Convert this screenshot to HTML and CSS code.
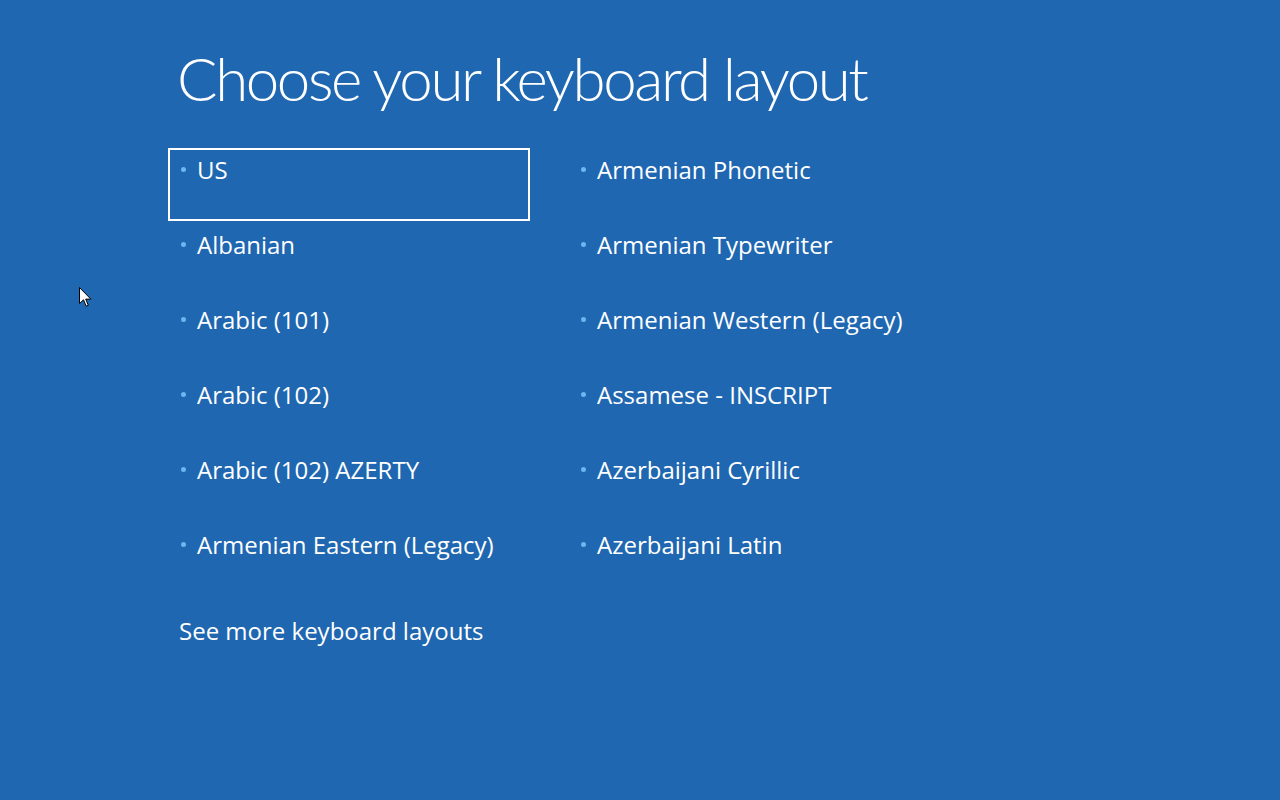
FILE: index.html
```html
<!DOCTYPE html>
<html lang="en">
<head>
<meta charset="utf-8">
<title>Choose your keyboard layout</title>
<link rel="stylesheet" href="styles.css">
</head>
<body>
<main class="page">
  <h1 class="title">Choose your keyboard layout</h1>
  <ul class="layouts">
    <li class="layout selected"><span class="dot"></span><span class="name">US</span></li>
    <li class="layout"><span class="dot"></span><span class="name">Armenian Phonetic</span></li>
    <li class="layout"><span class="dot"></span><span class="name">Albanian</span></li>
    <li class="layout"><span class="dot"></span><span class="name">Armenian Typewriter</span></li>
    <li class="layout"><span class="dot"></span><span class="name">Arabic (101)</span></li>
    <li class="layout"><span class="dot"></span><span class="name">Armenian Western (Legacy)</span></li>
    <li class="layout"><span class="dot"></span><span class="name">Arabic (102)</span></li>
    <li class="layout"><span class="dot"></span><span class="name">Assamese - INSCRIPT</span></li>
    <li class="layout"><span class="dot"></span><span class="name">Arabic (102) AZERTY</span></li>
    <li class="layout"><span class="dot"></span><span class="name">Azerbaijani Cyrillic</span></li>
    <li class="layout"><span class="dot"></span><span class="name">Armenian Eastern (Legacy)</span></li>
    <li class="layout"><span class="dot"></span><span class="name">Azerbaijani Latin</span></li>
  </ul>
  <a class="more" href="#">See more keyboard layouts</a>
  <svg class="cursor" width="13" height="21" viewBox="0 0 13 21" aria-hidden="true">
    <path d="M0.5 0.5 L0.5 16.5 L4.5 12.8 L7.2 19.2 L9.3 18.3 L6.7 12.1 L11.8 12.1 Z" fill="#fff" stroke="#000" stroke-width="1" stroke-linejoin="miter"/>
  </svg>
</main>
</body>
</html>
```
FILE: styles.css
```css
html, body {
  margin: 0;
  padding: 0;
  height: 100%;
}

body {
  background: #1f67b1;
  color: #ffffff;
  font-family: "Open Sans", "Noto Sans", "Liberation Sans", sans-serif;
  overflow: hidden;
}

.page {
  position: relative;
  height: 800px;
  padding: 48px 0 0 168px;
  box-sizing: border-box;
  display: flex;
  flex-direction: column;
  align-items: flex-start;
}

.title {
  margin: 0 0 40px 9px;
  font-family: Lato, "Open Sans", sans-serif;
  font-size: 60px;
  line-height: 60px;
  font-weight: 300;
  letter-spacing: -2.4px;
  white-space: nowrap;
}

.layouts {
  list-style: none;
  margin: 0;
  padding: 0;
  display: grid;
  grid-template-columns: 362px 362px;
  grid-auto-rows: 73px;
  column-gap: 38px;
  row-gap: 2px;
}

.layout {
  display: flex;
  align-items: flex-start;
  gap: 11px;
  box-sizing: border-box;
  border: 2px solid transparent;
  padding: 4px 0 0 11px;
  font-size: 24px;
  line-height: 32px;
  white-space: nowrap;
}

.layout.selected {
  border-color: #ffffff;
}

.dot {
  flex: none;
  width: 5px;
  height: 5px;
  margin-top: 13px;
  border-radius: 50%;
  background: #6fb5ef;
}

.more {
  margin: 19px 0 0 11px;
  font-size: 24px;
  line-height: 32px;
  color: #ffffff;
  text-decoration: none;
}

.cursor {
  position: absolute;
  left: 79px;
  top: 287px;
}
```
